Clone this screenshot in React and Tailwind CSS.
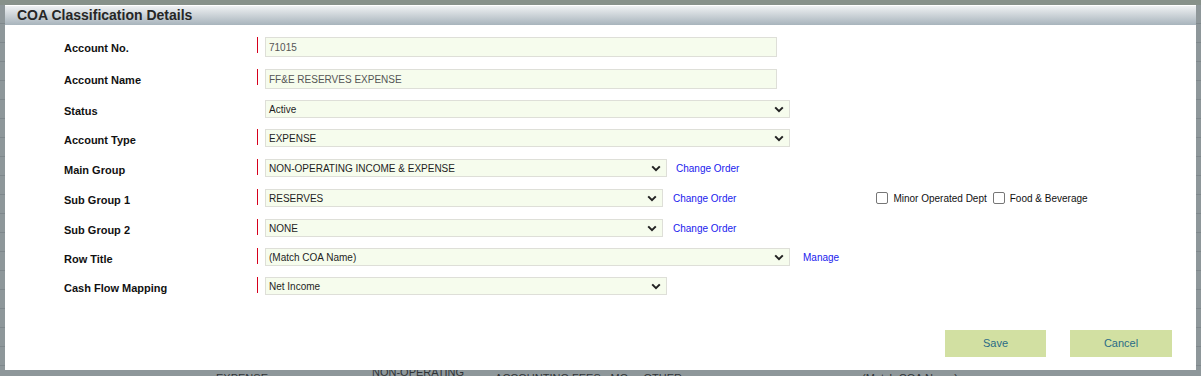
import React from "react";

function Chevron() {
  return (
    <svg width="10" height="7" viewBox="0 0 10 7" className="shrink-0">
      <polyline points="1.2,1.4 5,5.2 8.8,1.4" fill="none" stroke="#222" strokeWidth="2" />
    </svg>
  );
}

function Marker({ show = true }) {
  return <div className={show ? "w-px h-[16px] bg-[#d6001c] shrink-0" : "w-px h-[16px] shrink-0"} />;
}

function TextField({ value, w }) {
  return (
    <div
      className="h-[20px] border border-[#dedfd8] bg-[#f6fced] flex items-center pl-[3px] text-[10px] text-[#555]"
      style={{ width: w }}
    >
      {value}
    </div>
  );
}

function Select({ value, w }) {
  return (
    <div
      className="h-[18px] border border-[#dedfd8] bg-[#f6fced] flex items-center justify-between pl-[3px] pr-[5px] text-[10px] text-[#1e1e1e]"
      style={{ width: w }}
    >
      <span>{value}</span>
      <Chevron />
    </div>
  );
}

function Row({ label, h, marker = true, children }) {
  return (
    <div className="flex items-start" style={{ height: h }}>
      <div className="w-[252px] pl-[59px] shrink-0 pt-[5px] text-[11px] font-bold text-[#111] leading-[13px]">
        {label}
      </div>
      <Marker show={marker} />
      <div className="ml-[7px] flex items-center">{children}</div>
    </div>
  );
}

function Link({ children, ml }) {
  return (
    <span className="text-[10px] text-[#1a1aee]" style={{ marginLeft: ml }}>
      {children}
    </span>
  );
}

function Check({ label }) {
  return (
    <div className="flex items-center">
      <div className="w-[12px] h-[12px] rounded-[2px] border border-[#767676] bg-white" />
      <span className="ml-[5px] text-[10px] text-[#111]">{label}</span>
    </div>
  );
}

export default function App() {
  const lines = Array.from({ length: 19 });
  return (
    <div className="relative w-[1201px] h-[376px] overflow-hidden bg-[#8e979a] font-['Liberation_Sans',Arial,sans-serif]">
      {/* underlying page */}
      <div className="flex flex-col">
        <div className="h-[5px] bg-[#87918a]" />
        {lines.map((_, i) => (
          <div key={i} className="h-[19px] border-b border-[#7f888c]" />
        ))}
      </div>
      <div className="absolute left-0 top-[366px] w-full flex text-[11px] text-[#2e3336] leading-[12px]">
        <span className="ml-[216px] mt-[6px]">EXPENSE</span>
        <span className="ml-[104px]">NON-OPERATING</span>
        <span className="ml-[31px] mt-[6px]">ACCOUNTING FEES - MG...&nbsp;&nbsp;OTHER</span>
        <span className="ml-[180px] mt-[6px]">(Match COA Name)</span>
      </div>

      {/* dialog */}
      <div className="absolute left-[5px] top-[5px] w-[1191px] h-[365px] bg-white pt-[1px] flex flex-col">
        <div className="h-[19px] bg-linear-to-b from-[#eff1f3] to-[#a8b4bc] flex items-center pl-[12px]">
          <span className="text-[14px] font-bold text-[#262626]">COA Classification Details</span>
        </div>
        <div className="pt-[12px] flex flex-col">
          <Row label="Account No." h={32}>
            <TextField value="71015" w={512} />
          </Row>
          <Row label="Account Name" h={31}>
            <TextField value="FF&E RESERVES EXPENSE" w={512} />
          </Row>
          <Row label="Status" h={29} marker={false}>
            <Select value="Active" w={525} />
          </Row>
          <Row label="Account Type" h={30}>
            <Select value="EXPENSE" w={525} />
          </Row>
          <Row label="Main Group" h={30}>
            <Select value="NON-OPERATING INCOME & EXPENSE" w={402} />
            <Link ml={9}>Change Order</Link>
          </Row>
          <Row label="Sub Group 1" h={30}>
            <Select value="RESERVES" w={398} />
            <Link ml={10}>Change Order</Link>
            <div className="ml-[140px] flex items-center gap-[6px]">
              <Check label="Minor Operated Dept" />
              <Check label="Food & Beverage" />
            </div>
          </Row>
          <Row label="Sub Group 2" h={29}>
            <Select value="NONE" w={398} />
            <Link ml={10}>Change Order</Link>
          </Row>
          <Row label="Row Title" h={29}>
            <Select value="(Match COA Name)" w={525} />
            <Link ml={13}>Manage</Link>
          </Row>
          <Row label="Cash Flow Mapping" h={20}>
            <Select value="Net Income" w={402} />
          </Row>
        </div>
        <div className="mt-[33px] flex justify-end gap-[24px] pr-[24px]">
          <button className="w-[101px] h-[27px] bg-[#d2e0a2] text-[11px] text-[#2a6b86]">Save</button>
          <button className="w-[102px] h-[27px] bg-[#d2e0a2] text-[11px] text-[#2a6b86]">Cancel</button>
        </div>
      </div>
    </div>
  );
}
